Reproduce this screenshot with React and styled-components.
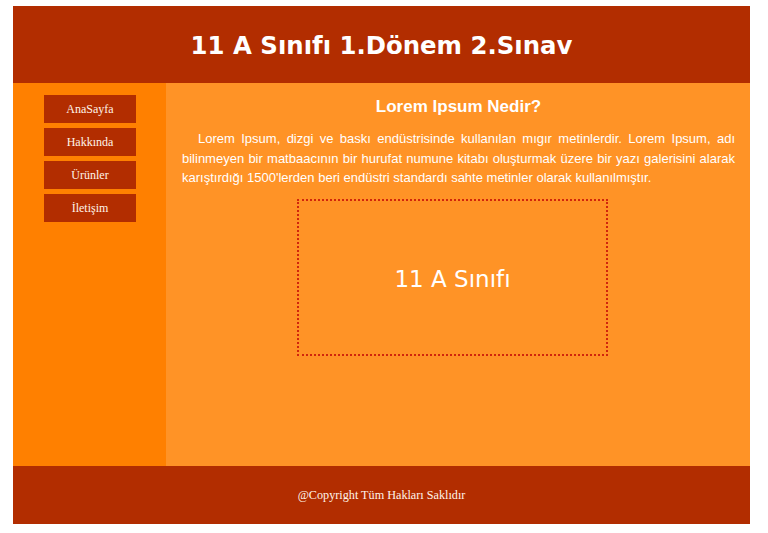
import React from 'react'
import styled, { createGlobalStyle } from 'styled-components'

const GlobalStyle = createGlobalStyle`
  body {
    margin: 0;
    background: #ffffff;
  }
`

const Page = styled.div`
  width: 737px;
  padding: 6px 0 0 13px;
`

const Header = styled.header`
  height: 77px;
  background: #b22d00;
  display: flex;
  align-items: center;
  justify-content: center;
  h1 {
    margin: 0;
    color: #fff;
    font-family: 'DejaVu Sans', Verdana, sans-serif;
    font-weight: bold;
    font-size: 24.4px;
    padding-top: 1px;
  }
`

const Body = styled.div`
  display: flex;
  height: 383px;
`

const Side = styled.nav`
  width: 153px;
  background: #ff8000;
  padding-top: 12px;
  box-sizing: border-box;
  ul {
    list-style: none;
    margin: 0;
    padding: 0 0 0 31px;
    display: flex;
    flex-direction: column;
    gap: 5px;
  }
`

const NavLink = styled.a`
  display: flex;
  align-items: center;
  justify-content: center;
  width: 92px;
  height: 28px;
  background: #b22d00;
  color: #fff4ea;
  text-decoration: none;
  font-family: 'Liberation Serif', 'Times New Roman', serif;
  font-size: 12px;
`

const Main = styled.main`
  flex: 1;
  background: #ff9326;
  padding: 14px 15px 0 16px;
  h2 {
    margin: 0 0 12px;
    text-align: center;
    color: #fff;
    font-family: 'Liberation Sans', Arial, sans-serif;
    font-size: 17px;
    font-weight: bold;
  }
  p {
    margin: 0;
    color: #fff;
    font-family: 'Liberation Sans', Arial, sans-serif;
    font-size: 13px;
    line-height: 19.5px;
    text-align: justify;
    text-indent: 16px;
  }
`

const Box = styled.div`
  width: 307px;
  height: 149px;
  margin: 11px 0 0 115px;
  padding-top: 4px;
  border: 2px dotted #d1260c;
  display: flex;
  align-items: center;
  justify-content: center;
  color: #fff;
  font-family: 'DejaVu Sans', Verdana, sans-serif;
  font-size: 23px;
`

const Footer = styled.footer`
  height: 58px;
  background: #b22d00;
  display: flex;
  align-items: center;
  justify-content: center;
  color: #fff4ea;
  font-family: 'Liberation Serif', 'Times New Roman', serif;
  font-size: 12.2px;
  padding-top: 1px;
  box-sizing: border-box;
`

const links = ['AnaSayfa', 'Hakkında', 'Ürünler', 'İletişim']

export default function App() {
  return (
    <>
      <GlobalStyle />
      <Page>
        <Header>
          <h1>11 A Sınıfı 1.Dönem 2.Sınav</h1>
        </Header>
        <Body>
          <Side>
            <ul>
              {links.map((l) => (
                <li key={l}>
                  <NavLink href="#">{l}</NavLink>
                </li>
              ))}
            </ul>
          </Side>
          <Main>
            <h2>Lorem Ipsum Nedir?</h2>
            <p>
              Lorem Ipsum, dizgi ve baskı endüstrisinde kullanılan mıgır metinlerdir. Lorem Ipsum, adı
              bilinmeyen bir matbaacının bir hurufat numune kitabı oluşturmak üzere bir yazı galerisini alarak
              karıştırdığı 1500'lerden beri endüstri standardı sahte metinler olarak kullanılmıştır.
            </p>
            <Box>11 A Sınıfı</Box>
          </Main>
        </Body>
        <Footer>@Copyright Tüm Hakları Saklıdır</Footer>
      </Page>
    </>
  )
}
